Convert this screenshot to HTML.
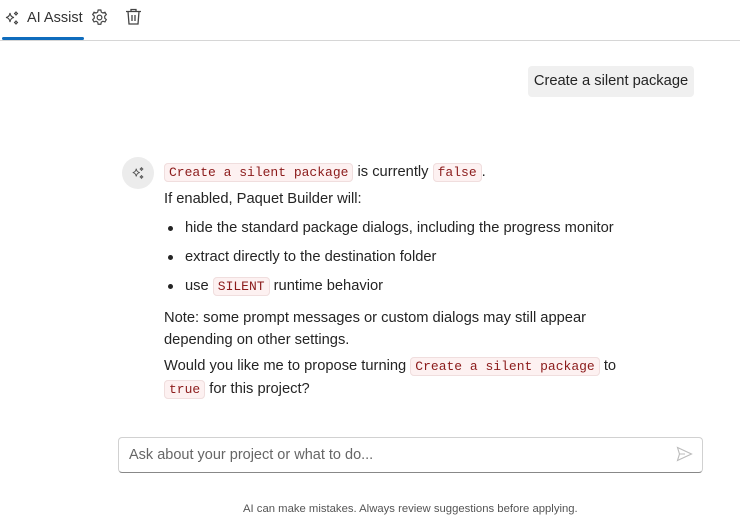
<!DOCTYPE html>
<html><head><meta charset="utf-8"><style>
*{margin:0;padding:0;box-sizing:border-box}
body{width:740px;height:522px;background:#fff;font-family:"Liberation Sans",sans-serif;color:#242424;position:relative;overflow:hidden;font-size:14.7px}
.a{position:absolute;white-space:nowrap}
code{font-family:"Liberation Mono",monospace;font-size:13px;color:#8b1a1a;background:#fdf1f1;border:1px solid #f0dede;border-radius:4px;padding:1px 4px}
.dot{position:absolute;width:5px;height:5px;border-radius:50%;background:#242424}
</style></head><body>
<svg class="a" style="left:4px;top:10px" width="16" height="16" viewBox="0 0 16 16" fill="none" stroke="#444" stroke-width="1.1"><path d="M6 3 Q6.5 7 10 7.5 Q6.5 8 6 12 Q5.5 8 2 7.5 Q5.5 7 6 3Z"/><path d="M12 1.5 Q12.2 3.3 14 3.5 Q12.2 3.7 12 5.5 Q11.8 3.7 10 3.5 Q11.8 3.3 12 1.5Z"/><path d="M12 10.5 Q12.2 12.3 14 12.5 Q12.2 12.7 12 14.5 Q11.8 12.7 10 12.5 Q11.8 12.3 12 10.5Z"/></svg>
<div class="a" style="left:27px;top:10px;font-size:14.5px;color:#333">AI Assist</div>
<svg class="a" style="left:90px;top:8px" width="19" height="19" viewBox="0 0 24 24" fill="none" stroke="#444" stroke-width="1.5"><circle cx="12" cy="12" r="3"/><path d="M10.3 2.5h3.4l.6 2.7 2 1.1 2.6-.9 1.7 2.9-2 1.9v2.6l2 1.9-1.7 2.9-2.6-.9-2 1.1-.6 2.7h-3.4l-.6-2.7-2-1.1-2.6.9-1.7-2.9 2-1.9v-2.6l-2-1.9 1.7-2.9 2.6.9 2-1.1z"/></svg>
<svg class="a" style="left:125px;top:8px" width="17" height="18" viewBox="0 0 17 18" fill="none" stroke="#444" stroke-width="1.3"><path d="M1 3.5h15M6 3.5V1.5h5v2M3 3.5l1 12.5h9l1-12.5M7 7v6M10 7v6"/></svg>
<div class="a" style="left:2px;top:37px;width:82px;height:3px;background:#0f6cbd;border-radius:2px"></div>
<div class="a" style="left:0;top:40px;width:740px;height:1px;background:#d6d6d6"></div>

<div class="a" style="left:528px;top:66px;width:166px;height:31px;background:#f0f0f0;border-radius:4px;line-height:31px;text-align:center;font-size:14.7px">Create a silent package</div>

<div class="a" style="left:122px;top:157px;width:32px;height:32px;border-radius:50%;background:#ececec"></div>
<svg class="a" style="left:131px;top:166px" width="14" height="14" viewBox="0 0 16 16" fill="none" stroke="#555" stroke-width="1.1"><path d="M6 3 Q6.5 7 10 7.5 Q6.5 8 6 12 Q5.5 8 2 7.5 Q5.5 7 6 3Z"/><path d="M12 1.5 Q12.2 3.3 14 3.5 Q12.2 3.7 12 5.5 Q11.8 3.7 10 3.5 Q11.8 3.3 12 1.5Z"/><path d="M12 10.5 Q12.2 12.3 14 12.5 Q12.2 12.7 12 14.5 Q11.8 12.7 10 12.5 Q11.8 12.3 12 10.5Z"/></svg>

<div class="a" style="left:164px;top:164px"><code>Create a silent package</code> is currently <code>false</code>.</div>
<div class="a" style="left:164px;top:191px">If enabled, Paquet Builder will:</div>
<div class="dot" style="left:168px;top:226px"></div>
<div class="a" style="left:185px;top:220px">hide the standard package dialogs, including the progress monitor</div>
<div class="dot" style="left:168px;top:255px"></div>
<div class="a" style="left:185px;top:249px">extract directly to the destination folder</div>
<div class="dot" style="left:168px;top:284px"></div>
<div class="a" style="left:185px;top:278px">use <code>SILENT</code> runtime behavior</div>
<div class="a" style="left:164px;top:310px">Note: some prompt messages or custom dialogs may still appear</div>
<div class="a" style="left:164px;top:332px">depending on other settings.</div>
<div class="a" style="left:164px;top:358px">Would you like me to propose turning <code>Create a silent package</code> to</div>
<div class="a" style="left:164px;top:381px"><code>true</code> for this project?</div>

<div class="a" style="left:118px;top:437px;width:585px;height:36px;border:1px solid #d1d1d1;border-bottom-color:#888;border-radius:4px"></div>
<div class="a" style="left:129px;top:447px;color:#666;font-size:14.5px">Ask about your project or what to do...</div>
<svg class="a" style="left:676px;top:446px" width="17" height="16" viewBox="0 0 17 16" fill="none" stroke="#bbb" stroke-width="1.1"><path d="M1.5 1.5L15.5 8L1.5 14.5L3.5 8Z M3.5 8H9"/></svg>
<div class="a" style="left:243px;top:503px;font-size:11.3px;color:#555">AI can make mistakes. Always review suggestions before applying.</div>
</body></html>
